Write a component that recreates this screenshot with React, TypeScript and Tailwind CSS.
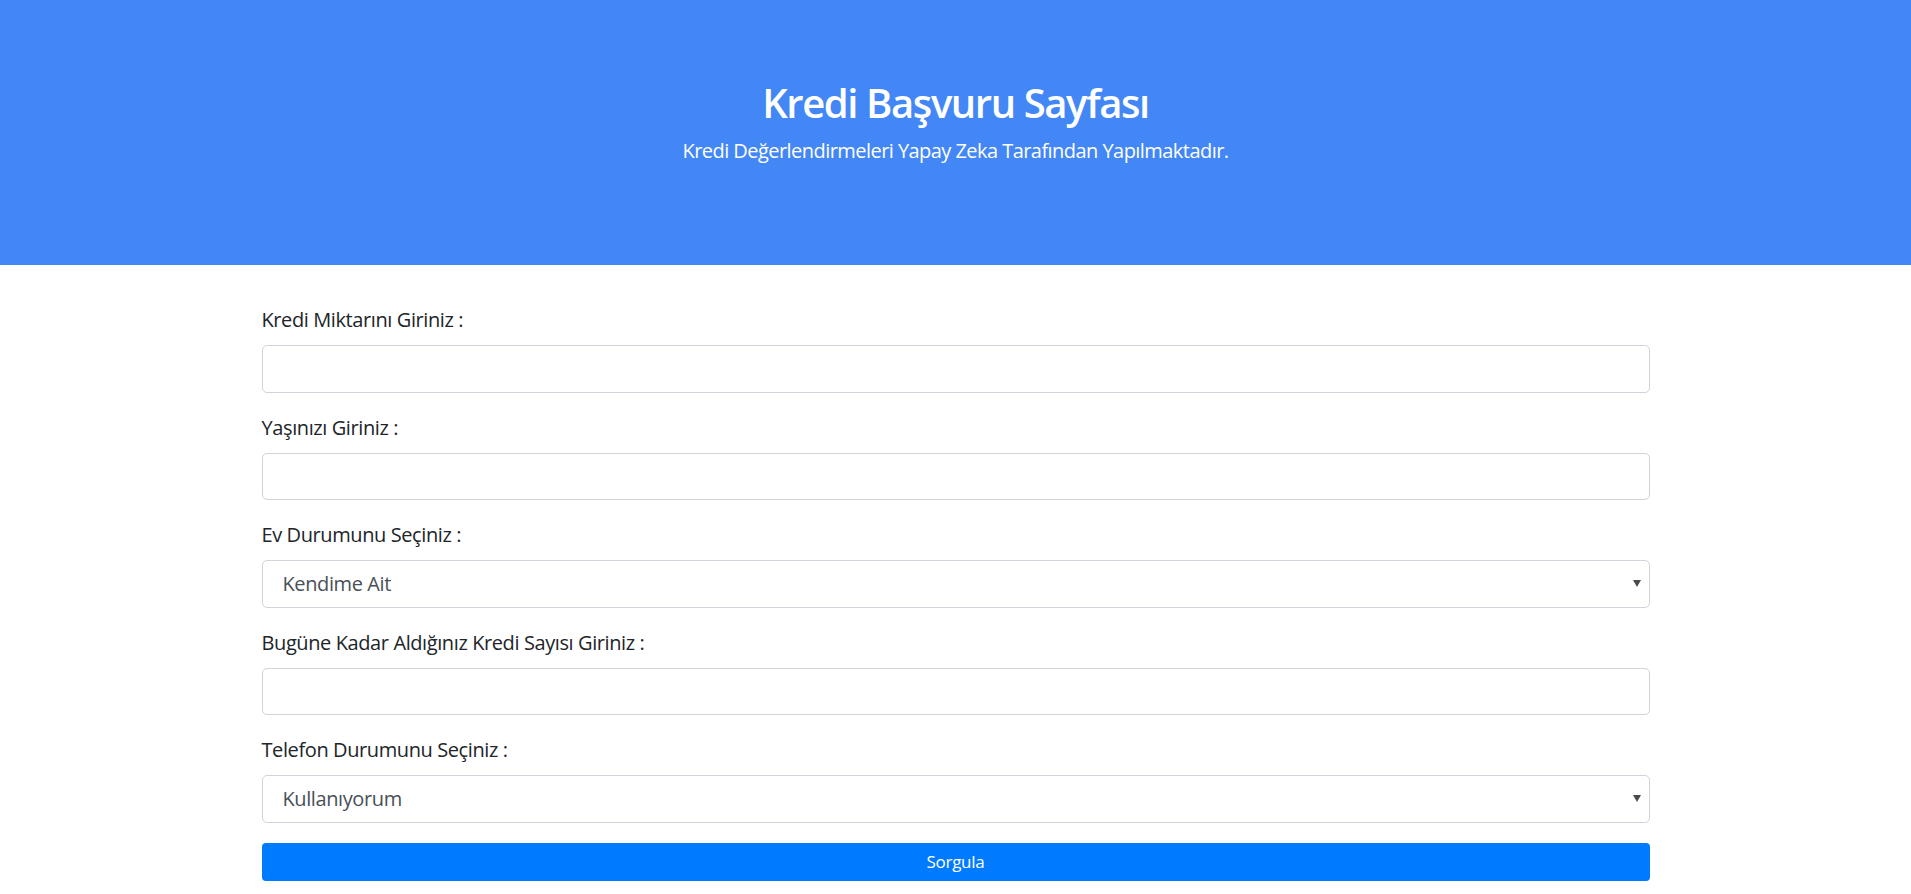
import React, { useState } from 'react';

const font = { fontFamily: '"Open Sans", "Noto Sans", sans-serif' };

function Field({ label, children }: { label: string; children: React.ReactNode }) {
  return (
    <div className="mb-[20px]">
      <label className="block mb-[10px] text-[20px] leading-[30px] tracking-[-0.4px] text-[#212529]">{label}</label>
      {children}
    </div>
  );
}

function TextInput() {
  return (
    <input
      type="text"
      className="block w-full h-[47.5px] px-[15px] rounded-[5px] border border-[#ced4da] bg-white text-[20px] text-[#495057] outline-none"
    />
  );
}

function Select({ options, value, onChange }: { options: string[]; value: string; onChange: (v: string) => void }) {
  return (
    <div className="relative">
      <select
        value={value}
        onChange={(e) => onChange(e.target.value)}
        className="block w-full h-[47.5px] pl-[20px] pr-[30px] rounded-[5px] border border-[#ced4da] bg-white text-[20px] tracking-[-0.4px] text-[#495057] appearance-none outline-none"
      >
        {options.map((o) => (
          <option key={o} value={o}>{o}</option>
        ))}
      </select>
      <span className="pointer-events-none absolute right-[9px] top-[20px] w-0 h-0 border-l-[4px] border-r-[4px] border-t-[7px] border-l-transparent border-r-transparent border-t-[#4a4a4a]" />
    </div>
  );
}

export default function App() {
  const [ev, setEv] = useState('Kendime Ait');
  const [tel, setTel] = useState('Kullanıyorum');

  return (
    <div className="min-h-screen bg-white" style={font}>
      <div className="h-[265px] bg-[#4287f5] pt-[79px] text-center text-white">
        <h1 className="text-[40px] leading-[48px] font-semibold tracking-[-1.4px]">Kredi Başvuru Sayfası</h1>
        <p className="mt-[9px] text-[20px] leading-[30px] tracking-[-0.55px]">Kredi Değerlendirmeleri Yapay Zeka Tarafından Yapılmaktadır.</p>
      </div>

      <form className="w-[1388px] mx-auto pt-[40px]" onSubmit={(e) => e.preventDefault()}>
        <Field label="Kredi Miktarını Giriniz :">
          <TextInput />
        </Field>
        <Field label="Yaşınızı Giriniz :">
          <TextInput />
        </Field>
        <Field label="Ev Durumunu Seçiniz :">
          <Select options={['Kendime Ait', 'Kira', 'Aile Evi']} value={ev} onChange={setEv} />
        </Field>
        <Field label="Bugüne Kadar Aldığınız Kredi Sayısı Giriniz :">
          <TextInput />
        </Field>
        <Field label="Telefon Durumunu Seçiniz :">
          <Select options={['Kullanıyorum', 'Kullanmıyorum']} value={tel} onChange={setTel} />
        </Field>
        <button
          type="submit"
          className="block w-full h-[38px] rounded-[4px] bg-[#007bff] text-white text-[17px] leading-[38px] tracking-[-0.3px]"
        >
          Sorgula
        </button>
      </form>
    </div>
  );
}
